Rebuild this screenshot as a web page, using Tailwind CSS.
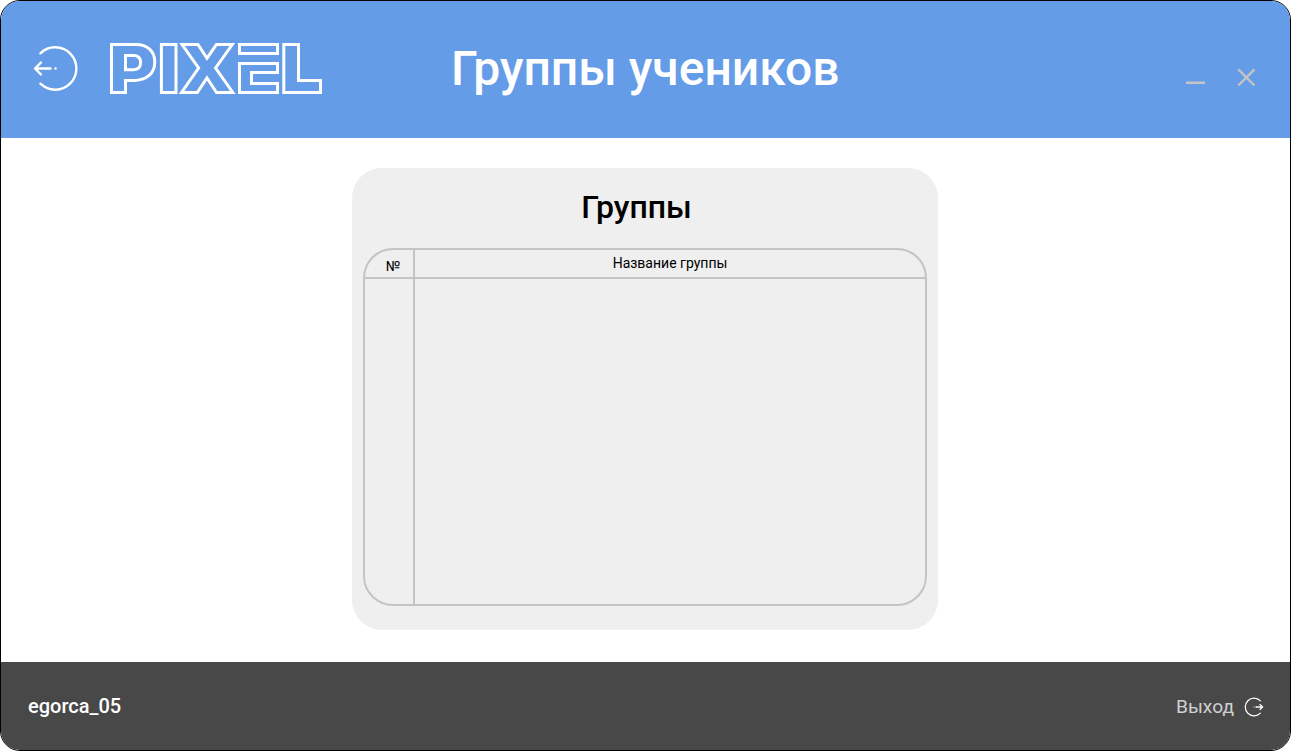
<!DOCTYPE html>
<html lang="ru">
<head>
<meta charset="utf-8">
<title>Группы учеников</title>
<script src="https://cdn.jsdelivr.net/npm/@tailwindcss/browser@4"></script>
</head>
<body class="bg-white font-['Roboto',sans-serif]">
<div class="flex h-[751px] w-[1291px] flex-col overflow-hidden rounded-[20px] border border-black bg-white">
  <header class="grid h-[137px] shrink-0 grid-cols-[450px_1fr_auto] bg-[#649ce7] text-white">
    <div class="flex pl-8 pt-[41px]">
      <svg class="mt-1 h-[46px] w-[46px]" viewBox="33 46 46 46" fill="none" stroke="#fff" stroke-width="2.4" stroke-linecap="round" stroke-linejoin="round">
        <path d="M40.4 53.3A21.2 21.2 0 1 1 40.4 83.7M50.5 68.5H35M41 62.5L35 68.5L41 74.5"/>
        <circle cx="55.5" cy="68.5" r="1.2" fill="#fff" stroke="none"/>
      </svg>
      <svg class="ml-[30px] h-[53px] w-[215px]" viewBox="109 42 215 53" fill="none" stroke="#fff" stroke-width="3" role="img" aria-label="Pixel">
        <path d="M111.5 44.5H135.5C148 44.5 154.8 51.5 154.8 62.3C154.8 73.8 146 80.5 134 80.5H125.5V92.5H111.5Z"/>
        <path d="M125.5 55.5H133.5C138.3 55.5 140.6 58.5 140.6 62.6C140.6 67 138.3 69.7 133.5 69.7H125.5Z"/>
        <path d="M161.4 44.5H176V92.5H161.4Z"/>
        <path d="M182 44.5H198L207 58.2L216.5 44.5H232.3L215.6 68L232.8 92.5H216.5L207 78L197.3 92.5H181.5L198.6 68Z"/>
        <path d="M239.5 44.5H277.5V53.5H239.5Z"/>
        <path d="M239.5 63.5H277.5V72.5H251.5V83.5H277.5V92.5H239.5Z"/>
        <path d="M283.8 44.5H298.5V80.5H320.5V92.5H283.8Z"/>
      </svg>
    </div>
    <h1 class="pt-10 text-[48px] leading-[56px] font-medium whitespace-nowrap">Группы учеников</h1>
    <div class="flex items-start gap-[31px] pr-[34px] pt-[66px]">
      <svg class="h-5 w-5" viewBox="1185 67 20 20"><path d="M1186 82.8H1205" stroke="#c4c4c4" stroke-width="2.6"/></svg>
      <svg class="h-5 w-5" viewBox="1236 67 20 20"><path d="M1238.3 69.3L1254.5 85.5M1254.5 69.3L1238.3 85.5" stroke="#c4c4c4" stroke-width="2.4"/></svg>
    </div>
  </header>

  <main class="flex flex-1 justify-center pt-[30px] pr-px">
    <section class="flex h-[462px] w-[586px] flex-col rounded-[30px] bg-[#efefef] px-[11px] text-black">
      <h2 class="pr-[17px] pt-5 text-center text-[32px] leading-[38px] font-medium">Группы</h2>
      <div class="mt-[22px] grid h-[358px] grid-cols-[50px_1fr] grid-rows-[29px_1fr] overflow-hidden rounded-[30px] border-2 border-[#c4c4c4] text-[14px] leading-4">
        <div class="border-r-2 border-b-2 border-[#c4c4c4] pl-2 pt-2 text-center">№</div>
        <div class="border-b-2 border-[#c4c4c4] pt-[5px] text-center">Название группы</div>
        <div class="border-r-2 border-[#c4c4c4]"></div>
        <div></div>
      </div>
    </section>
  </main>

  <footer class="flex h-[88px] shrink-0 items-center justify-between bg-[#484848] pr-[26px] pl-[27px] text-[20px] leading-6">
    <span class="font-medium text-white">egorca_05</span>
    <div class="flex items-center gap-[10px] pt-0.5 text-[#d0d0d0]">
      <span class="text-[19.2px]">Выход</span>
      <svg class="h-5 w-5" viewBox="1244 697 20 20" fill="none" stroke="#fff" stroke-linecap="round" stroke-linejoin="round">
        <path stroke-width="1.2" d="M1260.4 700.9A8.8 8.8 0 1 0 1260.4 713.1"/>
        <path stroke-width="1.3" d="M1256 707H1262.5M1260 704.6L1262.6 707L1260 709.4"/>
        <circle cx="1254" cy="707" r=".7" fill="#fff" stroke="none" opacity=".6"/>
      </svg>
    </div>
  </footer>
</div>
</body>
</html>
